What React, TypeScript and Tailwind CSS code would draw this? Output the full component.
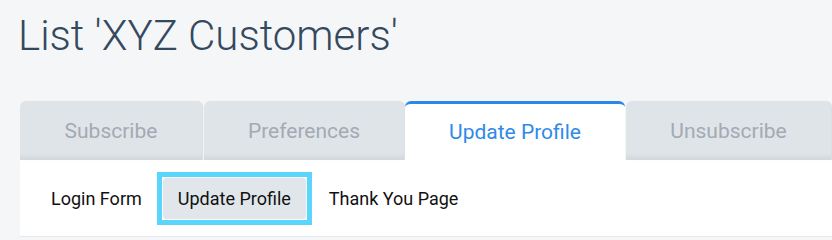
import React from "react";

const font = { fontFamily: "Roboto, 'Noto Sans', sans-serif" };

function Tab({ label, active, w }: { label: string; active?: boolean; w: string }) {
  if (active) {
    return (
      <div
        className={`${w} h-[59px] shrink-0 rounded-t-[6px] border-t-[3px] border-[#2b88e6] bg-white flex items-center justify-center pt-[1px] text-[21px] text-[#2f8ae8]`}
      >
        {label}
      </div>
    );
  }
  return (
    <div
      className={`${w} h-[59px] shrink-0 rounded-t-[6px] bg-[#dfe4e8] flex items-center justify-center pt-[3px] text-[21px] text-[#a3aab3] shadow-[inset_0_-7px_6px_-5px_rgba(0,0,0,0.08),1px_0_1px_rgba(0,0,0,0.10)]`}
    >
      {label}
    </div>
  );
}

export default function App() {
  return (
    <div className="w-[832px] h-[240px] overflow-hidden bg-[#f5f6f8]" style={font}>
      <div className="pl-[18px] pt-[10px] h-[101px]">
        <h1 className="text-[42px] font-light leading-[52px] text-[#34495e]">List 'XYZ Customers'</h1>
      </div>
      <div className="pl-[20px]">
        <div className="flex items-end">
          <Tab label="Subscribe" w="w-[182px]" />
          <div className="w-[2px] shrink-0" />
          <Tab label="Preferences" w="w-[200px]" />
          <div className="w-[1px] shrink-0" />
          <Tab label="Update Profile" active w="w-[220px]" />
          <div className="w-[1px] shrink-0" />
          <Tab label="Unsubscribe" w="w-[205px]" />
        </div>
        <div className="h-[77px] bg-white border-b border-[#e6e9ec] flex items-center pl-[31px] text-[18px] text-[#111111]">
          <span>Login Form</span>
          <div className="ml-[15px] border-[5px] border-[#5ad5fb] p-0 bg-white">
            <div className="h-[43px] px-[15px] rounded-[4px] bg-[#e1e6ea] flex items-center border border-white">
              Update Profile
            </div>
          </div>
          <span className="ml-[17px]">Thank You Page</span>
        </div>
      </div>
    </div>
  );
}
